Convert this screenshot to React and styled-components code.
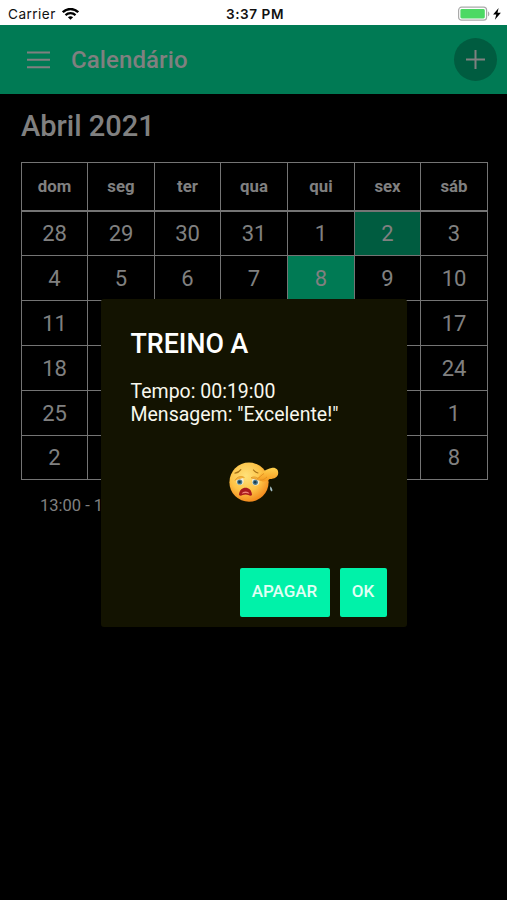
import React from "react";
import styled, { createGlobalStyle } from "styled-components";

const Global = createGlobalStyle`
  * { box-sizing: border-box; }
  body { margin: 0; background: #000; font-family: Roboto, sans-serif; overflow: hidden; }
  h1, h2, h3, p { margin: 0; font-weight: 500; }
`;

const Screen = styled.div`
  position: relative;
  width: 507px;
  height: 900px;
  overflow: hidden;
  background: #000;
`;

const StatusBar = styled.header`
  height: 25px;
  padding: 2px 5px 0 8px;
  display: grid;
  grid-template-columns: 1fr auto 1fr;
  align-items: center;
  background: #fff;
  color: #111;
  font-family: Inter, sans-serif;
  font-size: 13px;
`;

const Carrier = styled.div`
  display: flex;
  align-items: center;
  gap: 6px;
  font-size: 13.6px;
  letter-spacing: 0.45px;
  white-space: nowrap;
`;

const Clock = styled.div`
  font-weight: 600;
  font-size: 13.6px;
  letter-spacing: 0.55px;
  white-space: nowrap;
`;

const BatteryArea = styled.div`
  display: flex;
  justify-content: flex-end;
`;

const Toolbar = styled.nav`
  height: 69px;
  padding: 0 10px 0 26px;
  display: flex;
  align-items: center;
  background: #007a54;
  color: #808080;
`;

const ToolbarTitle = styled.h1`
  flex: 1;
  margin-left: 20px;
  font-size: 24px;
  line-height: 28px;
  letter-spacing: 0.1px;
`;

const AddButton = styled.button`
  width: 43px;
  height: 43px;
  padding: 0;
  border: 0;
  border-radius: 50%;
  display: grid;
  place-items: center;
  background: #005c40;
  color: #808080;
`;

const Content = styled.main`
  padding: 14px 19px 0 21px;
  color: #808080;
`;

const Month = styled.h2`
  height: 54px;
  font-size: 29px;
  line-height: 37px;
`;

const Calendar = styled.div`
  width: 467px;
  display: grid;
  grid-template-columns: 66px 67px 66px 67px 67px 66px 67px;
  grid-template-rows: 49px 44px 45px 45px 45px 45px 44px;
  border: solid #747474;
  border-width: 1px 0 0 1px;
`;

const WeekDay = styled.div`
  display: grid;
  place-items: center;
  padding-bottom: 1px;
  border: solid #747474;
  border-width: 0 1px 2px 0;
  font-size: 16.8px;
  font-weight: 700;
`;

const fills = { past: "#005c40", selected: "#007a54" };

const Day = styled.div`
  display: grid;
  place-items: center;
  border: solid #747474;
  border-width: 0 1px 1px 0;
  font-size: 22px;
  background: ${({ $mark }) => fills[$mark] || "transparent"};
`;

const EventTime = styled.p`
  padding: 16px 19px;
  font-size: 16.5px;
  line-height: 20px;
  font-weight: 400;
`;

const Overlay = styled.div`
  position: absolute;
  inset: 299px 0 auto;
  display: flex;
  justify-content: center;
`;

const Dialog = styled.section`
  width: 306px;
  height: 328px;
  padding: 29px 20px 10px 30px;
  display: flex;
  flex-direction: column;
  border-radius: 3px;
  background: #131301;
  color: #fff;
`;

const DialogTitle = styled.h3`
  font-size: 26.8px;
  line-height: 32px;
`;

const DialogText = styled.p`
  margin-top: 20px;
  font-size: 19.5px;
  line-height: 23px;
  font-weight: 400;
  color: #f8f8ee;
  white-space: nowrap;
`;

const Emoji = styled.svg`
  margin: 34px 0 0 97px;
`;

const Actions = styled.footer`
  margin-top: auto;
  display: flex;
  justify-content: flex-end;
  gap: 10px;
`;

const ActionButton = styled.button`
  width: ${({ $width }) => $width}px;
  height: 49px;
  padding: 0 0 3px;
  border: 0;
  border-radius: 2px;
  background: #00f2a9;
  color: #e2fff5;
  font: 500 17px/20px Roboto, sans-serif;
`;

const weekDays = ["dom", "seg", "ter", "qua", "qui", "sex", "sáb"];
const days = [
  28, 29, 30, 31, 1, 2, 3,
  4, 5, 6, 7, 8, 9, 10,
  11, 12, 13, 14, 15, 16, 17,
  18, 19, 20, 21, 22, 23, 24,
  25, 26, 27, 28, 29, 30, 1,
  2, 3, 4, 5, 6, 7, 8,
];
const marks = { 5: "past", 11: "selected" };

const WifiIcon = () => (
  <svg width="17" height="12" viewBox="0 0 17 12" fill="none" stroke="#000">
    <path d="M.8 4.2C5-.1 12-.1 16.2 4.2" strokeWidth="2.3" />
    <path d="M3.5 7.1c2.8-2.6 7.2-2.6 10 0" strokeWidth="2.2" />
    <path d="M8.5 11.8 5.9 9.2c1.5-1.2 3.7-1.2 5.2 0z" fill="#000" stroke="none" />
  </svg>
);

const BatteryIcon = () => (
  <svg width="45" height="16" viewBox="0 0 45 16">
    <rect x="1.6" y="1.2" width="28" height="13" rx="3" fill="#fff" stroke="#aaa" strokeWidth="1.2" />
    <rect x="3.4" y="3" width="24.4" height="9.4" rx="1.4" fill="#4cd964" />
    <path d="M31 5.4c1.8.5 1.8 4.3 0 4.8z" fill="#aaa" />
    <path d="M41.6 1.9 36.1 8.5h3.2l-1.4 5.3L43.9 6.7h-3.4z" fill="#000" />
  </svg>
);

const MenuIcon = () => (
  <svg width="25" height="20" viewBox="0 0 25 20" stroke="currentColor" strokeWidth="2">
    <path d="M1 2.5h23M1 9.8h23M1 17.2h23" />
  </svg>
);

const PlusIcon = () => (
  <svg width="21" height="21" viewBox="0 0 21 21" stroke="currentColor" strokeWidth="2">
    <path d="M1 10.5h19M10.5 1v19" />
  </svg>
);

const TiredFace = () => (
  <Emoji width="52" height="44" viewBox="0 0 52 44">
    <defs>
      <radialGradient id="face" cx="42%" cy="34%" r="66%">
        <stop offset="0" stopColor="#ffe17a" />
        <stop offset=".6" stopColor="#fdc346" />
        <stop offset="1" stopColor="#f28b1e" />
      </radialGradient>
      <linearGradient id="hand" x1="0" y1="0" x2="0" y2="1">
        <stop offset="0" stopColor="#ffd24f" />
        <stop offset="1" stopColor="#f69a20" />
      </linearGradient>
    </defs>
    <circle cx="21" cy="22.2" r="19.6" fill="url(#face)" />
    <ellipse cx="12" cy="21" rx="3.7" ry="4" fill="#f4ead0" />
    <ellipse cx="27.7" cy="21.5" rx="3.7" ry="4" fill="#f4ead0" />
    <circle cx="11.7" cy="22" r="2.6" fill="#477b8f" />
    <circle cx="27.3" cy="22.3" r="2.6" fill="#477b8f" />
    <circle cx="11.5" cy="22" r="1.3" fill="#203846" />
    <circle cx="27.2" cy="22.3" r="1.3" fill="#203846" />
    <path d="M7 20.5c2-4 6-5 9.5-3M23 17.8c3-2 7-.5 8.5 2.5z" fill="#f5b238" stroke="#dc9021" strokeWidth=".7" />
    <path d="M7 13.2c2.5-.3 4.5-1.6 5.8-3.5M25.5 10c1.2 1.6 2.5 2.6 4.5 3" fill="none" stroke="#a77216" strokeWidth="1.2" strokeLinecap="round" />
    <path d="M11 35c.2-9.8 12.8-9.8 13 0-1.8 1.7-3.6-.6-6.4-.6-3.1 0-4.8 2.3-6.6.6z" fill="#a9191c" />
    <path d="M13.8 33.8c.8-3 6.8-3 7.6 0-2.3-1-5.3-1-7.6 0z" fill="#f18478" />
    <path d="M31 16.5c3-5 7-7.4 12.5-8.6 4.2-.9 7 1.6 6.7 5.3-.3 4-3.6 5.6-8.4 5.8-3.6 3-8 3-10.2.9-2-.4-2-2-.6-3.4z" fill="url(#hand)" />
    <path d="M29 18.5c3-.4 4-3.5 7-5M32 20c3 .5 5.3-1.5 7-3" fill="none" stroke="#e49323" />
    <path d="M42.4 26.3c-.8 2.6 0 4.8 1.4 5.1 1.3-.7.2-3.2-1.4-5.1z" fill="#a6bfc5" />
  </Emoji>
);

export default function App() {
  return (
    <Screen>
      <Global />
      <StatusBar>
        <Carrier>Carrier <WifiIcon /></Carrier>
        <Clock>3:37 PM</Clock>
        <BatteryArea><BatteryIcon /></BatteryArea>
      </StatusBar>
      <Toolbar>
        <MenuIcon />
        <ToolbarTitle>Calendário</ToolbarTitle>
        <AddButton aria-label="Adicionar"><PlusIcon /></AddButton>
      </Toolbar>
      <Content>
        <Month>Abril 2021</Month>
        <Calendar>
          {weekDays.map((name) => <WeekDay key={name}>{name}</WeekDay>)}
          {days.map((day, i) => <Day key={i} $mark={marks[i]}>{day}</Day>)}
        </Calendar>
        <EventTime>13:00 - 14:00</EventTime>
      </Content>
      <Overlay>
        <Dialog role="dialog">
          <DialogTitle>TREINO A</DialogTitle>
          <DialogText>Tempo: 00:19:00<br />Mensagem: "Excelente!"</DialogText>
          <TiredFace />
          <Actions>
            <ActionButton $width={90}>APAGAR</ActionButton>
            <ActionButton $width={47}>OK</ActionButton>
          </Actions>
        </Dialog>
      </Overlay>
    </Screen>
  );
}
